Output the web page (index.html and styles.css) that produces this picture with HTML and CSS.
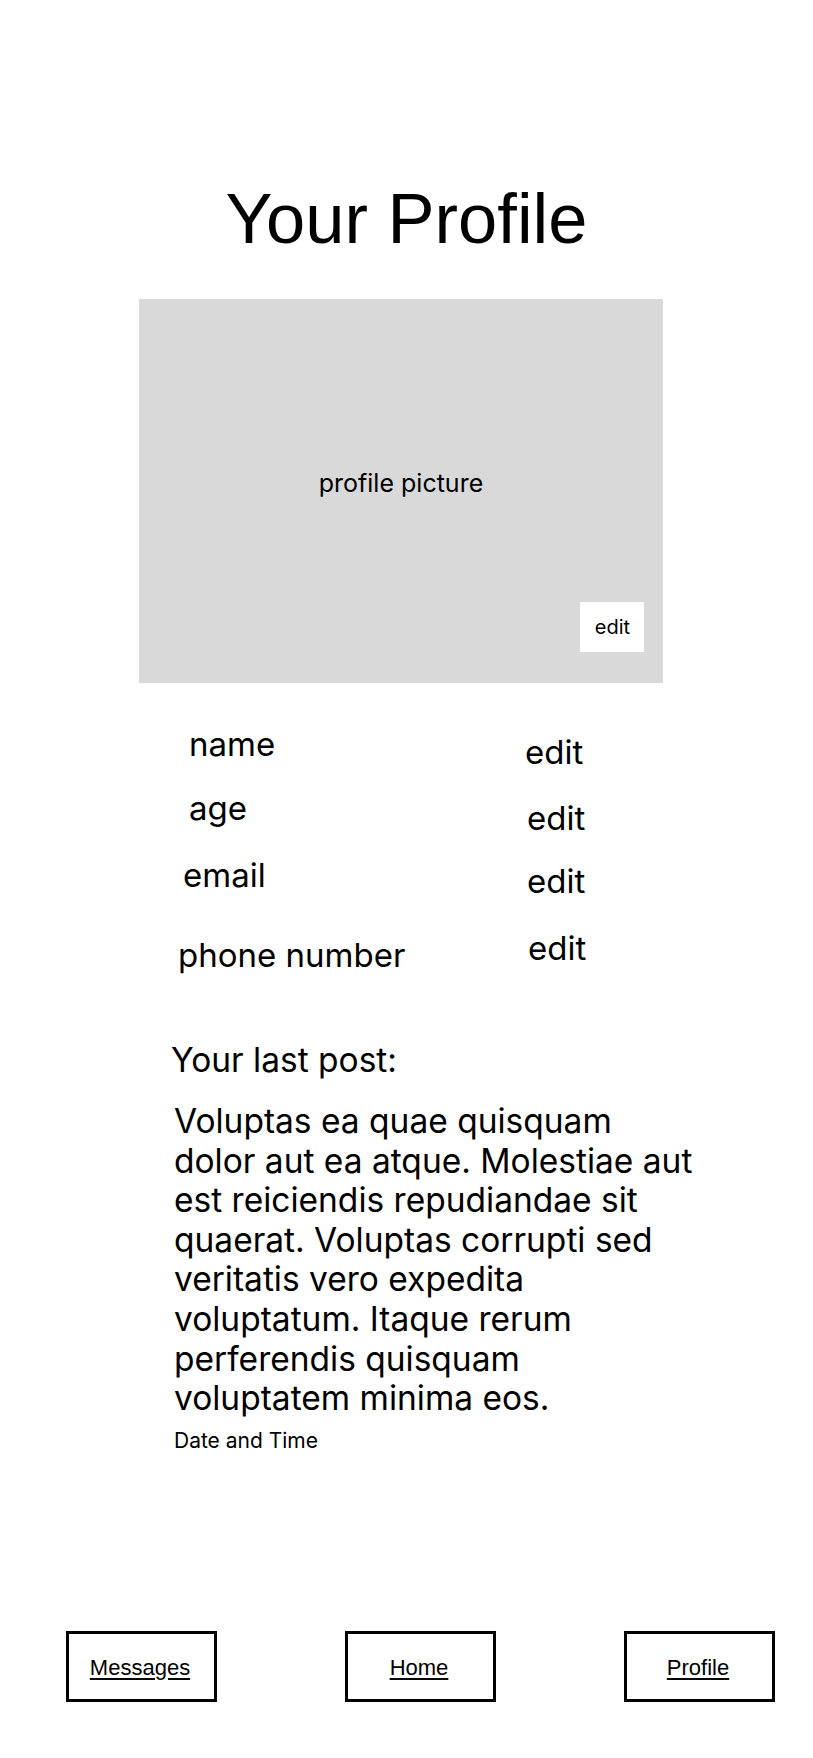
FILE: index.html
```html
<!DOCTYPE html>
<html lang="en">
<head>
<meta charset="utf-8">
<title>Your Profile</title>
<link rel="stylesheet" href="styles.css">
</head>
<body>
<div class="page">
  <h1 class="title">Your Profile</h1>

  <div class="picture">
    <div class="picture-label">profile picture</div>
    <div class="picture-edit">edit</div>
  </div>

  <div class="details">
    <div class="row row-name">
      <span class="label">name</span>
      <span class="edit">edit</span>
    </div>
    <div class="row row-age">
      <span class="label">age</span>
      <span class="edit">edit</span>
    </div>
    <div class="row row-email">
      <span class="label">email</span>
      <span class="edit">edit</span>
    </div>
    <div class="row row-phone">
      <span class="label">phone number</span>
      <span class="edit">edit</span>
    </div>
  </div>

  <div class="post">
    <div class="post-heading">Your last post:</div>
    <p class="post-body">Voluptas ea quae quisquam<br>dolor aut ea atque. Molestiae aut<br>est reiciendis repudiandae sit<br>quaerat. Voluptas corrupti sed<br>veritatis vero expedita<br>voluptatum. Itaque rerum<br>perferendis quisquam<br>voluptatem minima eos.</p>
    <div class="post-date">Date and Time</div>
  </div>

  <nav class="nav">
    <a class="nav-btn" href="#">Messages</a>
    <a class="nav-btn" href="#">Home</a>
    <a class="nav-btn" href="#">Profile</a>
  </nav>
</div>
</body>
</html>
```

FILE: styles.css
```css
html, body {
  margin: 0;
  padding: 0;
  background: #ffffff;
}

body {
  font-family: Inter, "Noto Sans", sans-serif;
  color: #000;
}

.page {
  width: 813px;
  min-height: 1758px;
  display: flex;
  flex-direction: column;
  box-sizing: border-box;
  padding-bottom: 56px;
}

.title {
  margin: 185px 0 0 0;
  font-family: "Liberation Sans", Arial, sans-serif;
  font-weight: 400;
  font-size: 70.5px;
  line-height: 68px;
  text-align: center;
}

.picture {
  margin: 46px 0 0 139px;
  width: 524px;
  height: 384px;
  background: #d9d9d9;
  display: flex;
  flex-direction: column;
  align-items: center;
  box-sizing: border-box;
  padding-top: 170px;
}

.picture-label {
  font-size: 25px;
  line-height: 29px;
}

.picture-edit {
  margin-top: auto;
  margin-bottom: 31px;
  margin-right: 19px;
  align-self: flex-end;
  width: 64px;
  height: 50px;
  background: #fff;
  display: flex;
  align-items: center;
  justify-content: center;
  font-size: 20px;
  padding-left: 1px;
  box-sizing: border-box;
}

.details {
  margin: 42px 0 0 176px;
  display: flex;
  flex-direction: column;
}

.row {
  display: grid;
  grid-template-columns: 349px auto;
  align-items: start;
  font-size: 33px;
  line-height: 39px;
}

.row-name .label { margin-left: 13px; }
.row-name .edit { margin-top: 8px; }

.row-age { margin-top: 17px; }
.row-age .label { margin-left: 13px; }
.row-age .edit { margin-top: 10px; margin-left: 2px; }

.row-email { margin-top: 18px; }
.row-email .label { margin-left: 7px; }
.row-email .edit { margin-top: 6px; margin-left: 2px; }

.row-phone { margin-top: 28px; }
.row-phone .label { margin-top: 7px; margin-left: 2px; }
.row-phone .edit { margin-left: 3px; }

.post {
  margin: 66px 0 0 171px;
  display: flex;
  flex-direction: column;
}

.post-heading {
  font-size: 33.5px;
  line-height: 39px;
}

.post-body {
  margin: 22px 0 0 3px;
  font-size: 33.5px;
  line-height: 39.6px;
  white-space: nowrap;
}

.post-date {
  margin: 9px 0 0 3px;
  font-size: 21px;
  line-height: 25px;
}

.nav {
  margin-top: auto;
  display: flex;
  gap: 128px;
  padding-left: 66px;
}

.nav-btn {
  width: 151px;
  height: 71px;
  box-sizing: border-box;
  border: 3px solid #000;
  display: flex;
  align-items: center;
  justify-content: center;
  padding-top: 3px;
  padding-right: 3px;
  font-family: "Liberation Sans", Arial, sans-serif;
  font-size: 22px;
  color: #000;
  text-decoration: underline;
  text-underline-offset: 3px;
}
```
